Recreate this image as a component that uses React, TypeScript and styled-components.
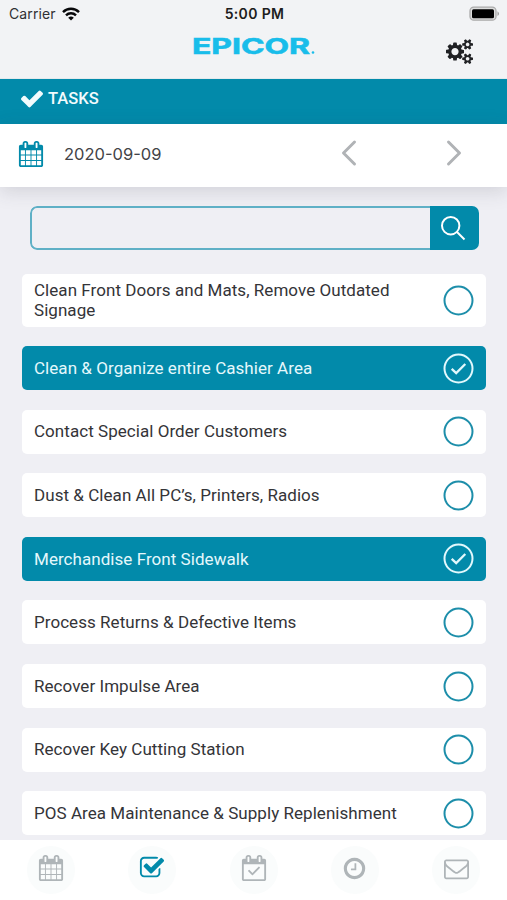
import React, { useState } from "react";
import styled, { createGlobalStyle } from "styled-components";

const teal = "#028aaa";

const Global = createGlobalStyle`
  * { box-sizing: border-box; }
  body { margin: 0; background: #efeff4; font-family: Roboto, sans-serif; color: #343438; }
  button, input { font: inherit; border: 0; padding: 0; background: none; outline: none; }
`;

const Screen = styled.div`
  height: 900px;
  display: flex;
  flex-direction: column;
  overflow: hidden;
`;
const Header = styled.header`
  flex: none;
  height: 79px;
  background: #f2f3f5;
  border-bottom: 1px solid #e4eaed;
`;
const StatusBar = styled.div`
  display: grid;
  grid-template-columns: 1fr auto 1fr;
  align-items: center;
  height: 27px;
  padding: 0 7px 0 9px;
  font-family: Inter, sans-serif;
  font-size: 14px;
  color: #303033;
`;
const Carrier = styled.div`
  display: flex;
  align-items: center;
  gap: 6px;
  letter-spacing: 0.1px;
`;
const Clock = styled.div`
  font-weight: 600;
  letter-spacing: 0.35px;
  color: #1d1d20;
`;
const Battery = styled.svg`
  justify-self: end;
  display: block;
`;
const BrandRow = styled.div`
  display: grid;
  grid-template-columns: 1fr auto 1fr;
  height: 51px;
`;
const Logo = styled.svg`
  grid-column: 2;
  display: block;
  margin-top: 7px;
  font-family: Inter, sans-serif;
  font-weight: 700;
  fill: #19bdea;
`;
const SettingsButton = styled.button`
  justify-self: end;
  align-self: start;
  margin: 12px 34px 0 0;
  color: #202124;
  svg { display: block; }
`;
const TitleBar = styled.div`
  flex: none;
  height: 44.5px;
  display: flex;
  align-items: center;
  gap: 5px;
  padding: 0 20px 5px 21px;
  background: ${teal};
  color: #f2fbfd;
  font-size: 16.5px;
  font-weight: 500;
`;
const DateBar = styled.div`
  flex: none;
  height: 63.5px;
  display: flex;
  align-items: center;
  padding: 0 41px 2px 18px;
  background: #fff;
  box-shadow: 0 4px 18px rgba(60, 60, 75, 0.17);
  color: ${teal};
`;
const DateText = styled.span`
  flex: 1;
  margin-left: 20px;
  font-family: Inter, sans-serif;
  font-size: 16.5px;
  color: #434347;
`;
const Stepper = styled.div`
  display: flex;
  gap: 81px;
  color: #b0b3b6;
  svg { display: block; position: static; margin-bottom: 2px; }
`;
const Content = styled.main`
  flex: 1;
  min-height: 0;
  overflow: hidden;
  padding: 19px 21px 0 22px;
`;
const Search = styled.div`
  display: flex;
  height: 43.5px;
  margin: 0 7px 24px 8px;
  border-radius: 7px;
  overflow: hidden;
`;
const SearchInput = styled.input`
  flex: 1;
  min-width: 0;
  padding: 0 12px;
  border: 2px solid #5fb0c6;
  border-right: 0;
  border-radius: 7px 0 0 7px;
`;
const SearchButton = styled.button`
  width: 49px;
  display: grid;
  place-items: center;
  padding-right: 3px;
  background: ${teal};
  color: #fff;
`;
const TaskList = styled.div`
  display: flex;
  flex-direction: column;
  gap: 19.6px;
`;
const TaskRow = styled.button<{ $done: boolean }>`
  display: flex;
  align-items: center;
  justify-content: space-between;
  min-height: 44px;
  padding: 5px 12px 5px 12px;
  border-radius: 5px;
  text-align: left;
  font-size: 17px;
  line-height: 20.5px;
  letter-spacing: 0.05px;
  background: ${(p) => (p.$done ? teal : "#fff")};
  color: ${(p) => (p.$done ? "#e5f8fc" : "#343438")};
  svg { flex: none; color: ${(p) => (p.$done ? "#e2f8fc" : "#1d8eaa")}; }
`;
const TaskName = styled.span`
  max-width: 375px;
  padding: 1px 0;
`;
const TabBar = styled.nav`
  flex: none;
  height: 60px;
  display: flex;
  justify-content: space-between;
  align-items: center;
  padding: 0 27px;
  background: #fff;
`;
const Tab = styled.button<{ $active?: boolean }>`
  width: 48px;
  height: 48px;
  border-radius: 50%;
  display: grid;
  place-items: center;
  padding-bottom: 4px;
  background: #fafcfc;
  color: ${(p) => (p.$active ? teal : "#afb5b8")};
`;

const icons = {
  calendar: { box: "0 0 1792 1792", d: "M192 1664h288v-288h-288v288zm352 0h320v-288h-320v288zm-352-352h288v-320h-288v320zm352 0h320v-320h-320v320zm-352-384h288v-288h-288v288zm736 736h320v-288h-320v288zm-384-736h320v-288h-320v288zm768 736h288v-288h-288v288zm-384-352h320v-320h-320v320zm-352-864v-288q0-13-9.5-22.5t-22.5-9.5h-64q-13 0-22.5 9.5t-9.5 22.5v288q0 13 9.5 22.5t22.5 9.5h64q13 0 22.5-9.5t9.5-22.5zm736 864h288v-320h-288v320zm-384-384h320v-288h-320v288zm384 0h288v-288h-288v288zm32-480v-288q0-13-9.5-22.5t-22.5-9.5h-64q-13 0-22.5 9.5t-9.5 22.5v288q0 13 9.5 22.5t22.5 9.5h64q13 0 22.5-9.5t9.5-22.5zm384-64v1280q0 52-38 90t-90 38h-1408q-52 0-90-38t-38-90v-1280q0-52 38-90t90-38h128v-96q0-66 47-113t113-47h64q66 0 113 47t47 113v96h384v-96q0-66 47-113t113-47h64q66 0 113 47t47 113v96h128q52 0 90 38t38 90z" },
  calendarCheck: { box: "0 0 1792 1792", d: "M192 1664h1408v-1024h-1408v1024zM576 448v-288q0-13-9.5-22.5t-22.5-9.5h-64q-13 0-22.5 9.5t-9.5 22.5v288q0 13 9.5 22.5t22.5 9.5h64q13 0 22.5-9.5t9.5-22.5zm768 0v-288q0-13-9.5-22.5t-22.5-9.5h-64q-13 0-22.5 9.5t-9.5 22.5v288q0 13 9.5 22.5t22.5 9.5h64q13 0 22.5-9.5t9.5-22.5zm384-64v1280q0 52-38 90t-90 38h-1408q-52 0-90-38t-38-90v-1280q0-52 38-90t90-38h128v-96q0-66 47-113t113-47h64q66 0 113 47t47 113v96h384v-96q0-66 47-113t113-47h64q66 0 113 47t47 113v96h128q52 0 90 38t38 90zM1303 903l-444 444-45 45q-23 23-46 0l-272-272q-22-23 0-46l45-45q23-23 46 0l204 204 421-421q23-23 46 0l45 45q23 23 0 46z" },
  check: { box: "121 298 1550 1196", d: "M1671 566q0 40-28 68l-724 724-136 136q-28 28-68 28t-68-28l-136-136-362-362q-28-28-28-68t28-68l136-136q28-28 68-28t68 28l294 295 656-657q28-28 68-28t68 28l136 136q28 28 28 68z" },
  checkSquare: { box: "0 0 1792 1792", d: "M1472 930v318q0 119-84.5 203.5t-203.5 84.5h-832q-119 0-203.5-84.5t-84.5-203.5v-832q0-119 84.5-203.5t203.5-84.5h832q63 0 117 25 15 7 18 23 3 17-9 29l-49 49q-10 10-23 10-3 0-9-2-23-6-45-6h-832q-66 0-113 47t-47 113v832q0 66 47 113t113 47h832q66 0 113-47t47-113v-254q0-13 9-22l64-64q10-10 23-10 6 0 12 3 20 8 20 29zm231-489l-814 814q-24 24-57 24t-57-24l-430-430q-24-24-24-57t24-57l110-110q24-24 57-24t57 24l263 263 647-647q24-24 57-24t57 24l110 110q24 24 24 57t-24 57z" },
  clock: { box: "0 0 1792 1792", d: "M1024 544v448q0 14-9 23t-23 9h-320q-14 0-23-9t-9-23v-64q0-14 9-23t23-9h224v-352q0-14 9-23t23-9h64q14 0 23 9t9 23zm416 352q0-148-73-273t-198-198-273-73-273 73-198 198-73 273 73 273 198 198 273 73 273-73 198-198 73-273zm224 0q0 209-103 385.5t-279.5 279.5-385.5 103-385.5-103-279.5-279.5-103-385.5 103-385.5 279.5-279.5 385.5-103 385.5 103 279.5 279.5 103 385.5z" },
  envelope: { box: "0 0 1792 1792", d: "M1664 1504v-768q-32 36-69 66-268 206-426 338-51 43-83 67t-86.5 48.5-102.5 24.5h-2q-48 0-102.5-24.5t-86.5-48.5-83-67q-158-132-426-338-37-30-69-66v768q0 13 9.5 22.5t22.5 9.5h1472q13 0 22.5-9.5t9.5-22.5zm0-1051v-24.5l-.5-13-3-12.5-5.5-9-9-7.5-14-2.5h-1472q-13 0-22.5 9.5t-9.5 22.5q0 168 147 284 193 152 401 317 6 5 35 29.5t46 37.5 44.5 31.5 50.5 27.5 43 9h2q20 0 43-9t50.5-27.5 44.5-31.5 46-37.5 35-29.5q208-165 401-317 54-43 100.5-115.5t46.5-131.5zm128-37v1088q0 66-47 113t-113 47h-1472q-66 0-113-47t-47-113v-1088q0-66 47-113t113-47h1472q66 0 113 47t47 113z" },
};
const bigGear = "M896 896q0-106-75-181t-181-75-181 75-75 181 75 181 181 75 181-75 75-181zM1280 805v185q0 10-7 19.5t-16 10.5l-155 24q-11 35-32 76 34 48 90 115 7 11 7 20 0 12-7 19-23 30-82.5 89.5t-78.5 59.5q-11 0-21-7l-115-90q-37 19-77 31-11 108-23 155-7 24-30 24h-186q-11 0-20-7.5t-10-17.5l-23-153q-34-10-75-31l-118 89q-7 7-20 7-11 0-21-8-144-133-144-160 0-9 7-19 10-14 41-53t47-61q-23-44-35-82l-152-24q-10-1-17-9.5t-7-19.5v-185q0-10 7-19.5t16-10.5l155-24q11-35 32-76-34-48-90-115-7-11-7-20 0-12 7-20 22-30 82-89t79-59q11 0 21 7l115 90q34-18 77-32 11-108 23-154 7-24 30-24h186q11 0 20 7.5t10 17.5l23 153q34 10 75 31l118-89q8-7 20-7 11 0 21 8 144 133 144 160 0 8-7 19-12 16-42 54t-45 60q23 48 34 82l152 23q10 2 17 10.5t7 19.5z";
const smallGear = "M1664 1408q0-52-38-90t-90-38-90 38-38 90q0 53 37.5 90.5t90.5 37.5 90.5-37.5 37.5-90.5zM1920 1338v140q0 16-149 31-12 27-30 52 51 113 51 138 0 4-4 7-122 71-124 71-8 0-46-47t-52-68q-20 2-30 2t-30-2q-14 21-52 68t-46 47q-2 0-124-71-4-3-4-7 0-25 51-138-18-25-30-52-149-15-149-31v-140q0-16 149-31 13-29 30-52-51-113-51-138 0-4 4-7 4-2 35-20t59-34 30-16q8 0 46 46.5t52 67.5q20-2 30-2t30 2q51-71 92-112l6-2q4 0 124 70 4 3 4 7 0 25-51 138 17 23 30 52 149 15 149 31z";

type IconName = keyof typeof icons;
const Icon = ({ name, width, height = width }: { name: IconName; width: number; height?: number }) => (
  <svg width={width} height={height} viewBox={icons[name].box} fill="currentColor" fillRule={name === "calendarCheck" ? "evenodd" : "nonzero"} overflow="visible">
    <path d={icons[name].d} />
  </svg>
);

const Gears = () => (
  <svg width="27" height="25.2" viewBox="0 0 1920 1792" fill="currentColor" fillRule="evenodd">
    <path d={bigGear} />
    <path d={smallGear} />
    <path d={smallGear} transform="translate(0 -1024)" />
  </svg>
);

const Wifi = () => (
  <svg width="18" height="14" viewBox="0 0 18 14" fill="none" stroke="#08080a" strokeWidth="2.4">
    <path d="M1 5.1a11.3 11.3 0 0 1 16 0M4 8.3a7.1 7.1 0 0 1 10 0" />
    <path d="M9 13.4 6.2 10.8a4 4 0 0 1 5.6 0z" fill="#08080a" stroke="none" />
  </svg>
);

const Chevron = ({ next = false }: { next?: boolean }) => (
  <svg width="24" height="28" viewBox="0 0 24 28" fill="none" stroke="currentColor" strokeWidth="3" strokeLinecap="round" strokeLinejoin="round">
    <path d={next ? "M6.5 3 17.5 14 6.5 25" : "M17.5 3 6.5 14 17.5 25"} />
  </svg>
);

const StatusCircle = ({ done }: { done: boolean }) => (
  <svg width="31" height="31" viewBox="0 0 31 31" fill="none" stroke="currentColor" strokeWidth="2">
    <circle cx="15.5" cy="15.5" r="14" />
    {done && <path d="m8.7 15.8 4.5 4.3 9.1-9.1" strokeWidth="2.3" />}
  </svg>
);

const initialTasks = [
  { name: "Clean Front Doors and Mats, Remove Outdated Signage", done: false },
  { name: "Clean & Organize entire Cashier Area", done: true },
  { name: "Contact Special Order Customers", done: false },
  { name: "Dust & Clean All PC’s, Printers, Radios", done: false },
  { name: "Merchandise Front Sidewalk", done: true },
  { name: "Process Returns & Defective Items", done: false },
  { name: "Recover Impulse Area", done: false },
  { name: "Recover Key Cutting Station", done: false },
  { name: "POS Area Maintenance & Supply Replenishment", done: false },
];

export default function App() {
  const [tasks, setTasks] = useState(initialTasks);
  const toggle = (index: number) =>
    setTasks((list) => list.map((t, i) => (i === index ? { ...t, done: !t.done } : t)));

  return (
    <Screen>
      <Global />
      <Header>
        <StatusBar>
          <Carrier>Carrier <Wifi /></Carrier>
          <Clock>5:00 PM</Clock>
          <Battery width="31" height="16" viewBox="0 0 31 16">
            <rect x="1" y="1.2" width="26" height="13" rx="3.8" fill="#ddd" stroke="#aaa" strokeWidth="1.3" />
            <rect x="3" y="3.2" width="22" height="9" rx="1.5" fill="#000" />
            <path d="M28.5 5.3q3 2.4 0 4.8z" fill="#999" />
          </Battery>
        </StatusBar>
        <BrandRow>
          <Logo width="122" height="24" viewBox="0 0 122 24">
            <text x="-1" y="19.5" fontSize="21.8" textLength="118" lengthAdjust="spacingAndGlyphs" stroke="#19bdea" strokeWidth="0.6">EPICOR</text>
            <circle cx="120" cy="18.5" r="1.3" />
          </Logo>
          <SettingsButton aria-label="Settings"><Gears /></SettingsButton>
        </BrandRow>
      </Header>
      <TitleBar><Icon name="check" width={22} height={17} />TASKS</TitleBar>
      <DateBar>
        <Icon name="calendar" width={26} />
        <DateText>2020-09-09</DateText>
        <Stepper><Chevron /><Chevron next /></Stepper>
      </DateBar>
      <Content>
        <Search>
          <SearchInput aria-label="Search tasks" />
          <SearchButton aria-label="Search">
            <svg width="26" height="26" viewBox="0 0 26 26" fill="none" stroke="currentColor" strokeWidth="2">
              <circle cx="10.7" cy="10.7" r="8.7" />
              <path d="m17 17 7.5 7.5" />
            </svg>
          </SearchButton>
        </Search>
        <TaskList>
          {tasks.map((task, i) => (
            <TaskRow key={task.name} $done={task.done} onClick={() => toggle(i)}>
              <TaskName>{task.name}</TaskName>
              <StatusCircle done={task.done} />
            </TaskRow>
          ))}
        </TaskList>
      </Content>
      <TabBar>
        <Tab aria-label="Calendar"><Icon name="calendar" width={26} /></Tab>
        <Tab aria-label="Tasks" $active><Icon name="checkSquare" width={26} /></Tab>
        <Tab aria-label="Schedule"><Icon name="calendarCheck" width={26} /></Tab>
        <Tab aria-label="History"><Icon name="clock" width={25} /></Tab>
        <Tab aria-label="Messages"><Icon name="envelope" width={25} /></Tab>
      </TabBar>
    </Screen>
  );
}
